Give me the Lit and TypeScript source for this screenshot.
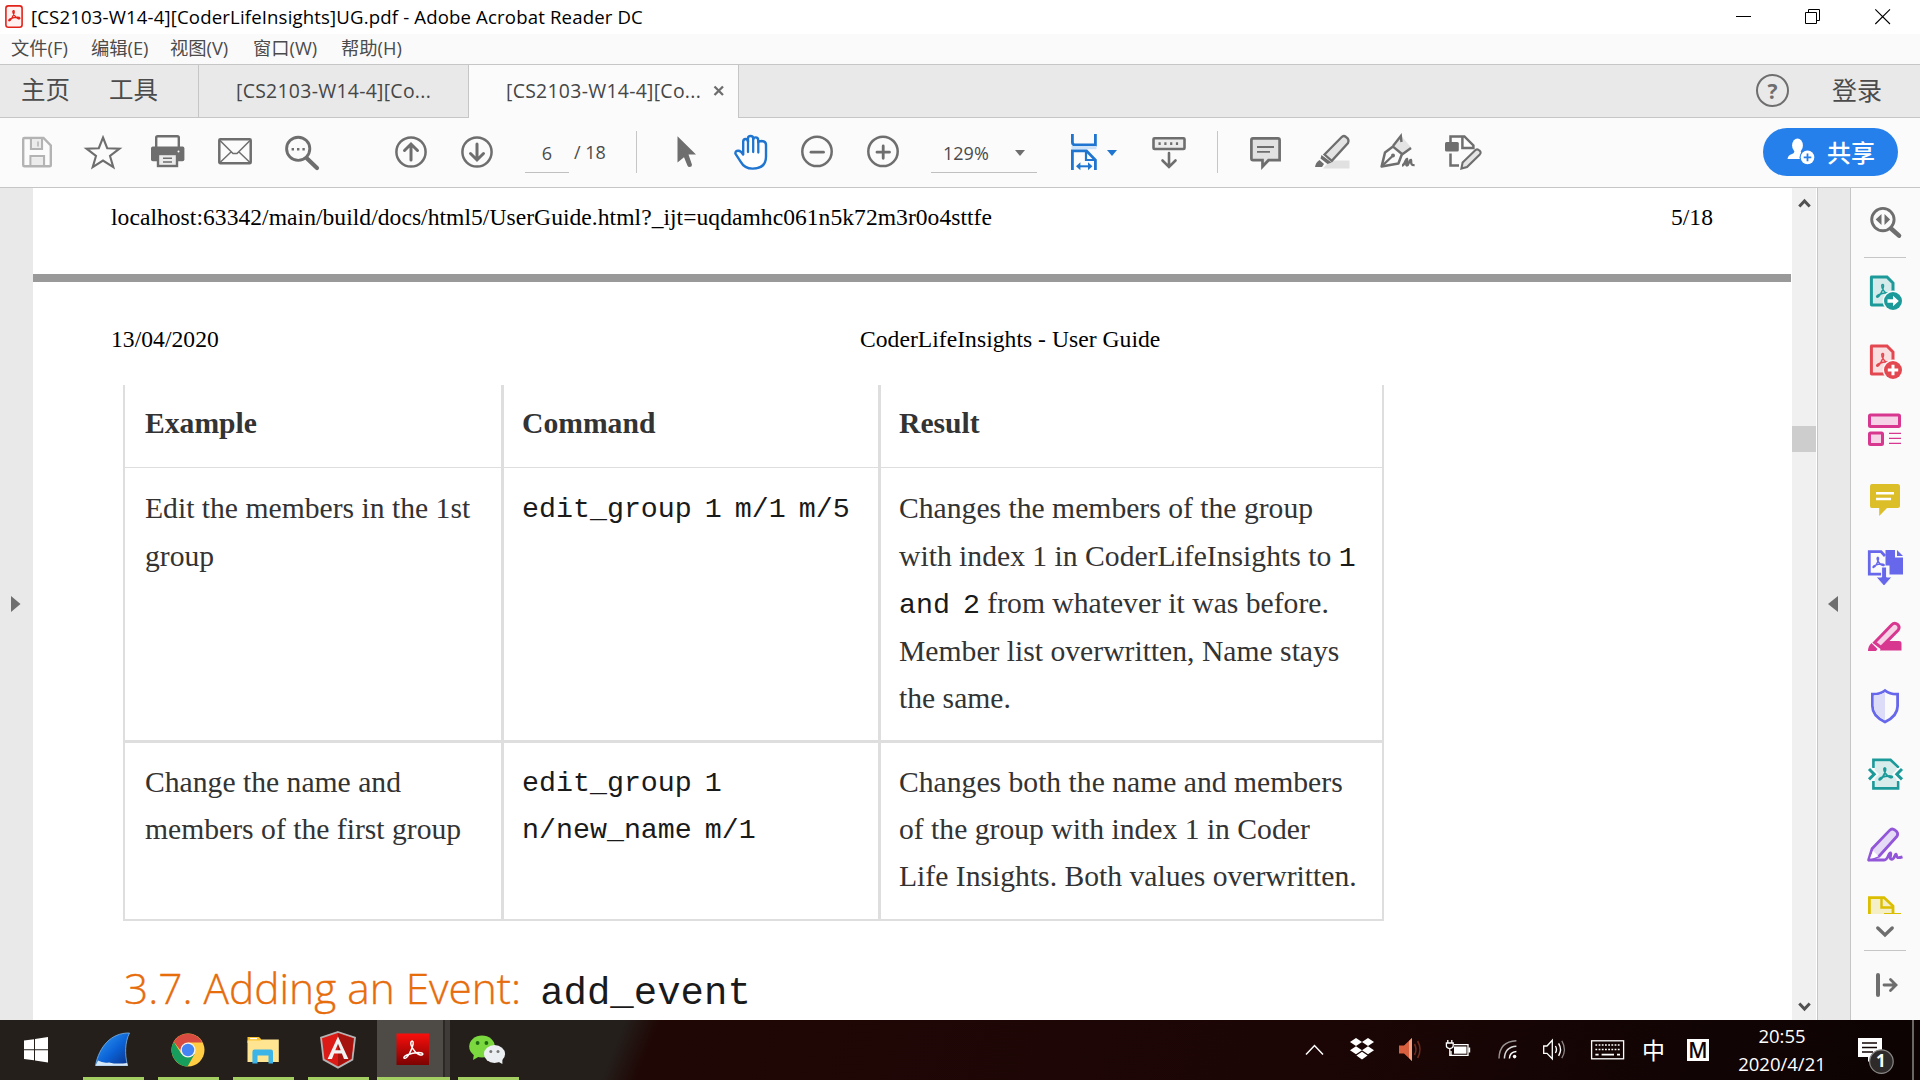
import { LitElement, html, css, svg } from "lit";
import { customElement } from "lit/decorators.js";

const ic = (w: number, h: number, body: unknown) =>
  html`<svg width=${w} height=${h} viewBox="0 0 ${w} ${h}" fill="none">${body}</svg>`;

/* ---------- toolbar icons (36px tall boxes) ---------- */
const G = "#6e6e6e";
const toolIcons = {
  save: ic(32, 36, svg`<path d="M1.2 5.2Q1.2 4 2.4 4H21.5L28.8 11.5V31Q28.8 32.3 27.5 32.3H2.4Q1.2 32.3 1.2 31Z" stroke="#b3b3b3" stroke-width="2.4"/><path d="M9 4.5V15H20V4.5M8.5 32V22H22V32" stroke="#b3b3b3" stroke-width="2.2"/><path d="M10.2 5H19V14H10.2ZM9.8 23.2H21V31H9.8Z" fill="#ebebeb"/><path d="M16 7.5V12.5" stroke="#b3b3b3" stroke-width="1.5"/>`),
  star: ic(38, 36, svg`<path d="M18 3.5L22.2 14.2L34.5 14.6L25 22L28.3 33.2L18 26.6L7.7 33.2L11 22L1.5 14.6L13.8 14.2Z" stroke="${G}" stroke-width="2.1"/>`),
  print: ic(34, 36, svg`<rect x="5.2" y="2.2" width="22.6" height="13" rx="1.5" fill="#fbfbfb" stroke="${G}" stroke-width="2.4"/><rect x="0" y="12.6" width="33.4" height="14.6" rx="1.8" fill="${G}"/><rect x="7" y="20" width="19" height="12" fill="#ebebeb" stroke="${G}" stroke-width="2.4"/><path d="M12 24.2H21M12 28H21" stroke="${G}" stroke-width="1.5"/><circle cx="27.5" cy="17.4" r="1" fill="#fff"/>`),
  mail: ic(36, 36, svg`<rect x="1.3" y="5.2" width="31.4" height="24" rx="1" stroke="${G}" stroke-width="2.5"/><path d="M2 6.5L15 19.5H19L32 6.5M2 28.5L13 18M32 28.5L21 18" stroke="${G}" stroke-width="1.5"/>`),
  find: ic(36, 36, svg`<circle cx="13.2" cy="14.8" r="11.6" stroke="${G}" stroke-width="2.9"/><path d="M21.8 24.2L32 34" stroke="${G}" stroke-width="4.2" stroke-linecap="round"/><path d="M6.6 15.2H9M12 15.2H14.4M17.4 15.2H19.8" stroke="${G}" stroke-width="2.4"/>`),
  up: ic(34, 36, svg`<circle cx="16" cy="18" r="14.6" stroke="${G}" stroke-width="2.5"/><path d="M16 26V10.5M9.5 16.5L16 10L22.5 16.5" stroke="${G}" stroke-width="3" stroke-linecap="round"/>`),
  down: ic(34, 36, svg`<circle cx="16" cy="18" r="14.6" stroke="${G}" stroke-width="2.5"/><path d="M16 10V25.5M9.5 19.5L16 26L22.5 19.5" stroke="${G}" stroke-width="3" stroke-linecap="round"/>`),
  cursor: ic(22, 36, svg`<path d="M0.5 2.2L19 20.6H11.5L15 30.8Q15 33 12.6 33Q11 33 10.4 31.4L7 23.2L0.5 28.6Z" fill="${G}"/>`),
  hand: ic(36, 36, svg`<path d="M9.2 20.5V7.8Q9.2 5 11.6 5Q14 5 14 7.8V4.5Q14 2 16.6 2Q19.2 2 19.2 4.5V5.4Q19.4 3.4 21.6 3.4Q24.2 3.4 24.2 6.4V8.2Q24.8 7 27.6 7Q32.2 7.4 32 11V22.5Q32 34.6 18.6 34.6Q10.5 34.6 6.6 27.6L1.4 19.6Q1.2 16.6 4.4 16.8Q7 17 9.2 20.5Z" fill="#fff" stroke="#1f75cf" stroke-width="2.4" stroke-linejoin="round"/><path d="M14 7V18M19.2 5V18M24.3 7V18.5" stroke="#1f75cf" stroke-width="2.3" stroke-linecap="round"/>`),
  minus: ic(34, 36, svg`<circle cx="16" cy="17.4" r="14.7" stroke="${G}" stroke-width="2.5"/><path d="M10 18.2H22.5" stroke="${G}" stroke-width="2.8" stroke-linecap="round"/>`),
  plus: ic(34, 36, svg`<circle cx="16" cy="17.4" r="14.7" stroke="${G}" stroke-width="2.5"/><path d="M10 18.2H22.5M16.2 12V24.3" stroke="${G}" stroke-width="2.8" stroke-linecap="round"/>`),
  fit: ic(48, 36, svg`<path d="M1.4 0V8.3Q1.4 11 4 11H24.4V0" stroke="#1f75cf" stroke-width="2.8"/><rect x="0.5" y="12" width="25" height="3.2" fill="#cfe3f8"/><path d="M1.4 36V16.8H15.5L24.4 26V36" stroke="#1f75cf" stroke-width="2.8"/><path d="M15 16.8V26H24" stroke="#1f75cf" stroke-width="2.2"/><path d="M7 32.3H19.5" stroke="#1f75cf" stroke-width="2"/><path d="M5 32.3L9.4 28.3V36.3ZM21.4 32.3L17 28.3V36.3Z" fill="#1f75cf"/><path d="M36 16H46L41 22Z" fill="#1f75cf"/>`),
  scroll: ic(36, 36, svg`<rect x="1.5" y="4.2" width="31" height="10.8" rx="1" fill="#ececec" stroke="${G}" stroke-width="2.6"/><path d="M6.5 9.6H8.7M12.3 9.6H14.5M18.1 9.6H20.3M23.9 9.6H26.1" stroke="${G}" stroke-width="2.8"/><path d="M17 19V32M10.5 26.5L17 33L23.5 26.5" stroke="${G}" stroke-width="2.6" stroke-linecap="round"/>`),
  note: ic(34, 36, svg`<path d="M3 4.4H28Q29.6 4.4 29.6 6V26.2H18.5L12.5 32.5V26.2H3Q1.4 26.2 1.4 24.6V6Q1.4 4.4 3 4.4Z" fill="#e1e1e1" stroke="${G}" stroke-width="2.7"/><path d="M7 13H24M7 17.8H20" stroke="${G}" stroke-width="1.8"/>`),
  marker: ic(36, 36, svg`<path d="M15 26.5H34.5V34.6H8Z" fill="#e1e1e1"/><path d="M9.5 20.5L26.5 3.2Q28.6 1 31 3Q34.6 5.4 33 9L16.8 26.8Z" fill="#e4e4e4" stroke="${G}" stroke-width="2.3"/><path d="M6.5 21L16.5 28.5L12.5 30L5.5 24.6Z" fill="${G}"/><path d="M4.5 26L9 30L7 33H0Q0.5 28.5 4.5 26Z" fill="${G}"/>`),
  pen: ic(38, 36, svg`<path d="M20.6 1L31.6 14L24 20.4L14 12Z" fill="#e4e4e4"/><path d="M1.6 32.6L5 18.5L13 12.6L22 20L18.4 29.5Z" stroke="${G}" stroke-width="2.5" stroke-linejoin="round"/><path d="M2 32L12 22.5M13 12L20.8 2L21.5 8M22 20.5L31 14" stroke="${G}" stroke-width="2.4"/><circle cx="13" cy="21.4" r="2" fill="${G}"/><path d="M22 31.5C25 31.5 25.5 24.5 27 24.8C28 25.5 25 31.8 27 31.5C29 31 29 25.5 31 25.8C31.8 26.5 29.5 31.5 34.6 31.2" stroke="${G}" stroke-width="2.3"/>`),
  edit: ic(40, 36, svg`<path d="M5.5 9V2.4H19.4L28.4 11.4V14H17.4V2.8" stroke="${G}" stroke-width="2.5"/><rect x="0" y="8" width="13.8" height="9.6" rx="1.5" fill="${G}"/><path d="M5.5 19.5V31.4H14" stroke="${G}" stroke-width="2.5"/><path d="M16.4 34.6L17.6 28.6L30.5 16Q32.5 14.4 34.5 16.6Q36.6 18.4 34.8 20.4L22 33Z" fill="#e4e4e4" stroke="${G}" stroke-width="2.1"/>`),
};

/* looping three-armed mark used on the document icons */
const trefoil = (x: number, y: number, s: number, c: string, w: number) =>
  svg`<path transform="translate(${x} ${y}) scale(${s})" d="M1 15.4C-0.6 13.8 6 10.6 13.6 10.4C18.4 10.4 18 13.2 15 12.6C10.4 11.5 6.4 4.4 6.8 1.8C7.3 -0.2 9.4 0.1 8.8 3.2C8 7.6 3.6 16.4 1 15.4Z" stroke="${c}" stroke-width="${w / s}"/>`;

/* ---------- right rail icons (36 x 36 boxes) ---------- */
const TEAL = "#1c9a9a", RED = "#e34850", MAG = "#d83790", YEL = "#dcbe29", IND = "#6767ec", PUR = "#9256d9";
const page = (c: string, bg: string) => svg`<path d="M4.6 3H20L26 9V31H4.6Q4.4 31 4.4 30.6V3.4Z" fill="${bg}" stroke="${c}" stroke-width="3"/>${trefoil(9, 10, 0.85, c, 1.5)}`;
const rail = [
  ic(36, 36, svg`<g transform="translate(0 -1)"><path d="M24 24.5L32 31.6" stroke="${G}" stroke-width="4.6" stroke-linecap="round"/><circle cx="15.9" cy="15.6" r="11.2" stroke="${G}" stroke-width="2.9"/><path d="M14.5 10V21L8.7 15.5ZM17.5 10V21L23.1 15.5Z" fill="${G}"/></g>`),
  ic(36, 36, svg`${page(TEAL, "#d5ebeb")}<circle cx="26" cy="27" r="10.4" fill="#fafafa"/><circle cx="26" cy="27" r="9" fill="${TEAL}"/><path d="M20.5 25.2H26V21.8L31.8 27L26 32.2V28.8H20.5Z" fill="#fff"/>`),
  ic(36, 36, svg`${page(RED, "#f9dfe0")}<circle cx="26" cy="27" r="10.4" fill="#fafafa"/><circle cx="26" cy="27" r="9" fill="${RED}"/><path d="M26 21.8V32.2M20.8 27H31.2" stroke="#fff" stroke-width="3"/>`),
  ic(36, 36, svg`<g transform="translate(0 1)"><rect x="2.5" y="2" width="30" height="11.6" rx="1" fill="#f6d3e6" stroke="${MAG}" stroke-width="3"/><rect x="2.5" y="20" width="13" height="11.6" rx="1" fill="#f6d3e6" stroke="${MAG}" stroke-width="3"/><path d="M22 20.4H34M22 25.4H34M22 30.4H34" stroke="${MAG}" stroke-width="1.4"/></g>`),
  ic(36, 36, svg`<g transform="translate(0 1)"><path d="M4.5 2H30.5Q33 2 33 4.5V23.5Q33 26 30.5 26H20L12.2 34V26H4.5Q3 26 3 23.5V4.5Q3 2 4.5 2Z" fill="${YEL}"/><path d="M9 11.2H27M9 17H24" stroke="#fff" stroke-width="2.4"/></g>`),
  ic(36, 36, svg`<path d="M14 24.2H2.3V1.6H14L18 6" stroke="${IND}" stroke-width="2.8"/><path d="M18.5 0H28V7.5H36V24.5H22.5V15.5H18.5Z" fill="${IND}"/><path d="M30 0L36 6H30Z" fill="${IND}"/>${trefoil(5.5, 7, 0.68, IND, 1.5)}<path d="M14.6 17H19.6V27H25L17 36L9 27H14.6Z" fill="${IND}" stroke="#fafafa" stroke-width="1"/>`),
  ic(36, 36, svg`<path d="M17 22H32Q34.5 22 34.5 24V31.5H13Z" fill="${MAG}"/><path d="M7.6 23.5L24.5 6Q27.5 2.8 30.5 5.4Q33.4 8 31 11.4L14 28.4Z" fill="#f6d3e6" stroke="${MAG}" stroke-width="3"/><path d="M4.5 24L10.5 30L9 32H1Q1 27 4.5 24Z" fill="${MAG}"/>`),
  ic(36, 36, svg`<path d="M18 2.5Q23 6.5 30.6 6.2V18Q30.6 28 18 34Q5.4 28 5.4 18V6.2Q13 6.5 18 2.5Z" stroke="${IND}" stroke-width="2.8"/><path d="M18 4.5Q13 7.6 6.8 7.6V18Q7 26.8 18 32.3Z" fill="#dcdcf9"/>`),
  ic(36, 36, svg`<path d="M6.5 11V3H23.5L31 10V11M31 24V31.4H6.5V24" fill="none" stroke="${TEAL}" stroke-width="2.8"/><path d="M7.8 4.4H23L29.6 10.6V30H7.8Z" fill="#d9ecec"/><path d="M1.5 12L7 17.2L1.5 22.4M35.5 12L30 17.2L35.5 22.4" stroke="#fafafa" stroke-width="7"/><path d="M2 12L7.2 17.2L2 22.4M35 12L29.8 17.2L35 22.4" stroke="${TEAL}" stroke-width="3"/>${trefoil(11.5, 10.5, 0.8, TEAL, 1.8)}`),
  ic(36, 36, svg`<g transform="translate(0 .8)"><path d="M1.6 33.2L5 22L22.6 3.6Q25 1 28 3.4Q32 6 30 9.5L12 29.5Z" fill="#e6dbf6" stroke="${PUR}" stroke-width="2.8" stroke-linejoin="round"/><path d="M2.5 33L6 24L11.5 29.5Z" fill="#fff"/><path d="M1.6 33.2H17C22 33 21 25.5 23.6 26C25 27 21.5 32.6 24.5 32.6C28 32.5 27.5 27 29 27.4C30.5 28.5 27.5 32.5 35.5 30" stroke="${PUR}" stroke-width="2.8"/></g>`),
];
const moreDoc = ic(36, 20, svg`<path d="M2.4 24V2.6H17L26 11V24Z" fill="#f5efc8" stroke="#dcbe00" stroke-width="2.8"/><path d="M14.5 3V12.5H25" stroke="#dcbe00" stroke-width="2.4"/><path d="M17 18H34V22H17Z" fill="#dcbe00"/>`);

/* ---------- taskbar icons ---------- */
const apps = {
  win: ic(24, 26, svg`<path d="M0 3.6L10 2.2V12.2H0ZM11 2L24 0V12.2H11ZM0 13.2H10V23.3L0 22ZM11 13.2H24V25.4L11 23.5Z" fill="#fff"/>`),
  shark: ic(36, 36, svg`<defs><linearGradient id="sh" x1="0" y1="0" x2="1" y2="1"><stop offset="0" stop-color="#35a0f5"/><stop offset=".55" stop-color="#0b62d6"/><stop offset="1" stop-color="#0a2f86"/></linearGradient></defs><path d="M0.5 33.5C4 15 16 0.5 34.5 1C30 10 29.5 22 32.5 33.5Z" fill="url(#sh)" stroke="#7fb6ea" stroke-width=".8"/><path d="M0.5 33.8L3 28.6Q8 31.5 14 30.4Q22 32.4 32 31L33 33.8Z" fill="#d6e8f8"/>`),
  chrome: ic(34, 34, svg`<circle cx="17" cy="17" r="16.5" fill="#fc4"/><path d="M17 9.4H31.3A16.5 16.5 0 0 0 2.7 8.8L10 18Z" fill="#d94b40"/><path d="M2.7 8.8A16.5 16.5 0 0 0 16.6 33.5L23.6 21L10.4 21Z" fill="#189e5c"/><circle cx="17" cy="17" r="7.6" fill="#f4f4f4"/><circle cx="17" cy="17" r="6.2" fill="#4484f3"/>`),
  folder: ic(32, 28, svg`<path d="M0.5 1H12L14.5 3.5V7H0.5Z" fill="#f7c331"/><path d="M0.5 4.5H13.5L15 3.4H31.8V26H0.5Z" fill="#ffe592"/><path d="M3 2.6H10" stroke="#fff" stroke-width="1.2"/><path d="M5.4 27.5V16Q5.4 13.6 7.5 13.6H24Q26 13.6 26 16V27.5H21.5V19.5H10.5V27.5Z" fill="#3cb4e7"/>`),
  angular: ic(36, 38, svg`<path d="M18 1L35 6.6L32.4 28.6L18 36.6L3.6 28.6L1 6.6Z" fill="#dd1b16" stroke="#b3b3b3" stroke-width="1.8"/><path d="M18 2.2V35.2L31.4 27.8L33.6 7.5Z" fill="#a6120d"/><path d="M18 5.5L28.4 28H24L21.9 22.6H14.1L12 28H7.6ZM18 12.8L15.3 19.2H20.7Z" fill="#f2f2f2" fill-rule="evenodd"/>`),
  acrobat: ic(34, 34, svg`<defs><linearGradient id="ac" x1="0" y1="0" x2="0" y2="1"><stop offset="0" stop-color="#fa0f0c"/><stop offset="1" stop-color="#7c0202"/></linearGradient></defs><rect x="0.5" y="0.5" width="32.5" height="31.5" fill="url(#ac)"/>${trefoil(7, 7.5, 1.15, "#fff", 1.5)}`),
  wechat: ic(38, 30, svg`<ellipse cx="13" cy="11.5" rx="12.8" ry="11" fill="#7bd83f"/><path d="M5 19L4 25L11 21Z" fill="#7bd83f"/><circle cx="8.6" cy="8" r="1.9" fill="#1f6b12"/><circle cx="17.4" cy="8" r="1.9" fill="#1f6b12"/><ellipse cx="25.5" cy="19" rx="10.6" ry="9" fill="#eceff1"/><path d="M28 26L33.4 29V24Z" fill="#eceff1"/><circle cx="21.8" cy="16.4" r="1.5" fill="#777"/><circle cx="29" cy="16.4" r="1.5" fill="#777"/>`),
};
const tray = {
  caret: ic(20, 12, svg`<path d="M1 10.5L9.5 1.5L18 10.5" stroke="#fff" stroke-width="1.5"/>`),
  dropbox: ic(26, 24, svg`<path d="M6 0L12 4L6 8L0 4ZM18 0L24 4L18 8L12 4ZM6 8.2L12 12.2L6 16.2L0 12.2ZM18 8.2L24 12.2L18 16.2L12 12.2ZM12 13.8L17.6 17.6L12 21.6L6.4 17.6Z" fill="#fff"/>`),
  red: ic(24, 24, svg`<path d="M0 7.5H5L13 0V23L5 15.5H0Z" fill="#d9603f"/><path d="M10 3V20L13 23V0Z" fill="#f3a083"/><path d="M15.5 6Q18.5 11.5 15.5 17M18.6 3Q23.4 11.5 18.6 20" stroke="#6e2a1a" stroke-width="1.6"/>`),
  battery: ic(26, 20, svg`<path d="M8 4.6H22V15.4H5V11" stroke="#fff" stroke-width="1.3"/><rect x="8" y="6.5" width="12.5" height="7.2" fill="#fff"/><rect x="22.4" y="7.5" width="1.8" height="5" fill="#fff"/><path d="M1.8 0V3M5.8 0V3M0.4 3H7.2V6Q7.2 8 3.8 8.6Q0.4 8 0.4 6ZM3.8 8.5V15.4H6" stroke="#fff" stroke-width="1.3"/>`),
  wifi: ic(22, 22, svg`<circle cx="16.6" cy="17.6" r="1.8" fill="#fff"/><path d="M11.4 19.5Q11.6 12.9 18.4 12.5" stroke="#fff" stroke-width="1.5"/><path d="M6.4 19.5Q6.8 7.8 18.4 7.2" stroke="#d8d8d8" stroke-width="1.5"/><path d="M1 19.5Q1.4 2.4 18.4 1.8" stroke="#9b9494" stroke-width="1.4"/>`),
  sound: ic(24, 22, svg`<path d="M0.7 7H4L9.3 1.2V19.8L4 14.4H0.7Z" stroke="#fff" stroke-width="1.3"/><path d="M12.4 7Q14.6 10.5 12.4 14M15.6 4.4Q19.4 10.5 15.6 16.8" stroke="#fff" stroke-width="1.4"/><path d="M18.8 1.8Q24 10.5 18.8 19.2" stroke="#8d8585" stroke-width="1.3"/>`),
  keyboard: ic(34, 20, svg`<rect x="0.6" y="0.8" width="32" height="18" stroke="#fff" stroke-width="1.3"/><path d="M4.4 5H29M4.4 9.6H29" stroke="#fff" stroke-width="1.5" stroke-dasharray="1.8 1.4"/><path d="M4.4 14.6H7.6M10.6 14.6H23M26 14.6H29" stroke="#fff" stroke-width="1.6"/>`),
  notice: ic(38, 38, svg`<path d="M0 0H24V19H15.4L10 24V19H0Z" fill="#fff"/><path d="M4 5H19M4 9.5H19M4 14H15" stroke="#120405" stroke-width="1.4"/><circle cx="23.4" cy="23.6" r="11.8" fill="#2e2a2a" stroke="#8b8888" stroke-width="1.2"/>`),
};

@customElement("app-root")
export class AppRoot extends LitElement {
  static styles = css`
    :host { display: flex; flex-direction: column; width: 1920px; height: 1080px; overflow: hidden; background: #fff;
      font-family: "Open Sans", "Noto Sans CJK SC", sans-serif; color: #4b4b4b; }
    * { box-sizing: border-box; }
    svg { display: block; flex: none; overflow: visible; }
    span { white-space: nowrap; }

    .title { display: flex; height: 34px; flex: none; background: #fff; color: #000; padding: 5px 29px 0 5px; }
    .title .name { font-size: 18.6px; letter-spacing: 0.15px; line-height: 24px; margin-left: 8px; flex: 1; }
    .wins { display: flex; gap: 54px; padding-top: 4px; }
    .menu { display: grid; grid-template-columns: 80px 79px 83px 88px 100px; height: 30px; flex: none; padding-left: 11px; background: #fafafa; font-size: 18.3px; line-height: 28px; }

    .tabs { display: flex; height: 54px; flex: none; background: #e9e9e9; border-top: 1px solid #c6c6c6; border-bottom: 1px solid #c6c6c6; }
    .nav { display: flex; width: 199px; padding-left: 21px; gap: 39px; font-size: 24.5px; line-height: 50px; border-right: 1px solid #c6c6c6; }
    .tab { display: flex; width: 269px; padding-left: 37px; font-size: 19.4px; letter-spacing: 0.3px; line-height: 52px; color: #464646; }
    .tab.on { width: 271px; background: #fbfbfb; border: solid #c6c6c6; border-width: 0 1px; height: 53px; }
    .tab svg { margin: 20px 0 0 12px; }
    .account { display: flex; margin-left: auto; padding-right: 38px; gap: 43px; font-size: 25px; line-height: 51px; }
    .help { display: grid; place-items: center; width: 33px; height: 33px; margin-top: 9px; border: 2.5px solid #6e6e6e; border-radius: 50%; font-size: 21px; font-weight: 700; line-height: 20px; color: #6e6e6e; }

    .tools { display: grid; grid-template-columns: 63px 66px 67px 67px 110px 66px 64px 49px 62px 41px 57px 67px 66px 64px 140px 81px 65px 33px 65px 65px 65px 318px 135px; height: 70px; flex: none; padding: 16px 0 0 22px; background: #fbfbfb; border-bottom: 1px solid #c6c6c6; align-items: start; }
    .field { display: flex; align-items: center; height: 39px; border-bottom: 1px solid #c0c0c0; font-size: 18px; }
    .pg { width: 44px; justify-content: center; }
    .of { font-size: 18px; line-height: 37px; }
    .zoom { width: 106px; padding: 0 0 1px 12px; gap: 26px; }
    .sep { width: 1px; height: 42px; margin-top: -3px; background: #c6c6c6; }
    .share { display: flex; align-items: center; width: 135px; height: 48px; margin-top: -6px; border-radius: 24px; background: #2680eb; color: #fff; padding-left: 24px; gap: 11px; font-size: 24px; font-weight: 500; }
    .share span { padding-bottom: 2px; }

    .body { display: flex; height: 832px; flex: none; }
    .left { width: 33px; background: #e9e9e9; display: flex; align-items: center; padding-left: 11px; }
    .doc { width: 1759px; height: 832px; overflow: hidden; background: #fff; font-family: "Liberation Serif", serif; color: #000; }
    .foot { display: flex; justify-content: space-between; height: 86px; padding: 16px 79px 0 78px; font-size: 23.55px; letter-spacing: 0.045px; line-height: 27px; }
    .gap { height: 8px; background: #999; margin-right: 1px; }
    .head { display: grid; grid-template-columns: 749px 1fr; height: 103px; padding: 44px 0 0 78px; font-size: 23.6px; letter-spacing: 0.03px; line-height: 27px; }
    .table { display: grid; grid-template-columns: 379px 377px 503px; width: 1261px; margin-left: 90px; border-left: 2px solid #dedede; color: #333; font-size: 29.65px; line-height: 47.5px; }
    .cell { padding-left: 18px; border-right: 3px solid #dedede; }
    .cell.first { padding-left: 20px; }
    .cell.end { border-right-width: 2px; }
    .cell span { display: block; }
    .h { height: 83px; font-weight: 700; border-bottom: 1px solid #dedede; padding-top: 15px; }
    .r1 { height: 275px; border-bottom: 3px solid #dedede; padding-top: 17px; }
    .r2 { height: 178px; border-bottom: 2px solid #dedede; padding-top: 16px; line-height: 47.2px; }
    .cell .mono, .cell code, .section code { font-family: "Courier 10 Pitch", "Liberation Mono", monospace; color: #1a1a1a; }
    .cell .mono, .cell code { font-size: 28.3px; word-spacing: -4px; }
    .cell code { line-height: 0; }
    .cell.cmd { padding-top: 18px; }
    .cell.cmd.r2 { padding-top: 17px; }
    .section { display: flex; align-items: baseline; gap: 19px; margin: 29px 0 0 91px; font: 300 42.4px/76px "Open Sans", sans-serif; color: #e66c0c; -webkit-text-stroke: 0.35px #e66c0c; }
    .section code { font-size: 39px; line-height: 60px; -webkit-text-stroke: 0; }

    .bar { display: flex; flex-direction: column; width: 24px; background: #f0f0f0; padding: 10px 0 8px; align-items: center; }
    .thumb { width: 24px; height: 26px; margin: 218px 0 auto; background: #cdcdcd; }
    .side { display: flex; align-items: center; width: 34px; margin-left: 1px; border: solid #c6c6c6; border-width: 0 1px; background: #e9e9e9; padding-left: 10px; }
    .rail { display: flex; flex-direction: column; align-items: center; width: 69px; background: #fafafa; padding: 17px 1px 0 0; }
    .rail .i { height: 69px; flex: none; }
    .hr { width: 42px; height: 1px; background: #c6c6c6; flex: none; }
    .hr.top { margin: -1px 0 0; }
    .rail .i.a { height: 53px; }
    .rail .i.b { height: 69px; margin-top: 16px; }
    .chev { margin: 12px 0; }
    .cut { height: 19px; overflow: hidden; flex: none; }
    .out { margin-top: 22px; padding-left: 3px; }

    .task { display: flex; height: 60px; flex: none; background: linear-gradient(112deg, #241f1b 0, #241f1b 580px, #1f0705 612px, #1c0605 1200px, #110404 1600px, #0d0303 100%); color: #fff; }
    .app { display: flex; flex-direction: column; align-items: center; justify-content: center; width: 61px; margin-right: 14px; border-bottom: 3px solid #a3cf62; padding: 3px 2px 0 0; }
    .start { width: 71px; padding-right: 0; margin-right: 12px; border-color: transparent; }
    .hot { width: 73px; margin: 0 8px 0 -6px; background: linear-gradient(90deg, #4e4a46 66px, #2c2825 66px, #2c2825 68px, #3f3b38 68px); padding-right: 1px; }
    .tray { display: grid; align-items: center; margin-left: auto; grid-template-columns: 45px 49px 47px 52px 45px 48px 53px 43px 50px 90px 31px 54px 8px; }
    .zh { font-size: 23px; line-height: 56px; margin-left: -2px; }
    .ime { display: grid; place-items: center; width: 22px; height: 22px; background: #fff; color: #120405; font-size: 21px; font-weight: 600; line-height: 22px; }
    .clock { text-align: center; font-size: 18.5px; line-height: 28px; }
    .clock span { display: block; }
    .bell { position: relative; margin-top: 14px; }
    .bell b { position: absolute; left: 18px; top: 11px; font-size: 17px; line-height: 24px; }
    .edge { width: 2px; height: 60px; background: #6b6666; }
  `;

  render() {
    return html`
      <div class="title">
        ${ic(18, 24, svg`<rect x="0.9" y="0.9" width="16.2" height="21.4" rx="2.5" fill="#fff2f1" stroke="#e2231a" stroke-width="1.6"/>${trefoil(3.2, 5.2, 0.68, "#e2231a", 1.3)}`)}
        <span class="name">[CS2103-W14-4][CoderLifeInsights]UG.pdf - Adobe Acrobat Reader DC</span>
        <div class="wins">
          ${ic(15, 16, svg`<path d="M0 7.5H15" stroke="#000"/>`)}
          ${ic(16, 16, svg`<path d="M0.5 3.5H11.5V14.5H0.5ZM3.5 3.5V0.5H14.5V11.5H11.5" stroke="#000"/>`)}
          ${ic(16, 16, svg`<path d="M0.3 0.3L15 15M15 0.3L0.3 15" stroke="#000" stroke-width="1.1"/>`)}
        </div>
      </div>
      <div class="menu"><span>文件(F)</span><span>编辑(E)</span><span>视图(V)</span><span>窗口(W)</span><span>帮助(H)</span></div>
      <div class="tabs">
        <div class="nav"><span>主页</span><span>工具</span></div>
        <div class="tab"><span>[CS2103-W14-4][Co...</span></div>
        <div class="tab on"><span>[CS2103-W14-4][Co...</span>${ic(12, 12, svg`<path d="M1.5 1.5L10 10M10 1.5L1.5 10" stroke="#6e6e6e" stroke-width="2.3"/>`)}</div>
        <div class="account"><div class="help">?</div><span>登录</span></div>
      </div>
      <div class="tools">
        ${toolIcons.save}${toolIcons.star}${toolIcons.print}${toolIcons.mail}${toolIcons.find}${toolIcons.up}${toolIcons.down}
        <div class="field pg"><span>6</span></div><span class="of">/ 18</span><div class="sep"></div>
        ${toolIcons.cursor}${toolIcons.hand}${toolIcons.minus}${toolIcons.plus}
        <div class="field zoom"><span>129%</span>${ic(10, 6, svg`<path d="M0 0H10L5 6Z" fill="#6e6e6e"/>`)}</div>
        ${toolIcons.fit}${toolIcons.scroll}<div class="sep"></div>
        ${toolIcons.note}${toolIcons.marker}${toolIcons.pen}${toolIcons.edit}
        <div class="share">${ic(29, 28, svg`<ellipse cx="10.5" cy="7.4" rx="5.4" ry="7" fill="#fff"/><path d="M0.5 21Q1 17 5 16Q7.5 15.4 7.5 12H13.5Q13.5 15 15.5 16V21Z" fill="#fff"/><circle cx="20.5" cy="19.4" r="8" fill="#2680eb"/><circle cx="20.5" cy="19.4" r="6.8" fill="#fff"/><path d="M20.5 15.6V23.2M16.7 19.4H24.3" stroke="#2680eb" stroke-width="1.8"/>`)}<span>共享</span></div>
      </div>
      <div class="body">
        <div class="left">${ic(10, 16, svg`<path d="M0 0L9.5 8L0 16Z" fill="#6e6e6e"/>`)}</div>
        <div class="doc">
          <div class="foot"><span>localhost:63342/main/build/docs/html5/UserGuide.html?_ijt=uqdamhc061n5k72m3r0o4sttfe</span><span>5/18</span></div>
          <div class="gap"></div>
          <div class="head"><span>13/04/2020</span><span>CoderLifeInsights - User Guide</span></div>
          <div class="table">
            <div class="cell first h"><span>Example</span></div><div class="cell h"><span>Command</span></div><div class="cell h end"><span>Result</span></div>
            <div class="cell first r1"><span>Edit the members in the 1st</span><span>group</span></div>
            <div class="cell cmd r1"><span class="mono">edit_group 1 m/1 m/5</span></div>
            <div class="cell r1 end"><span>Changes the members of the group</span><span>with index 1 in CoderLifeInsights to <code>1</code></span><span><code>and 2</code> from whatever it was before.</span><span>Member list overwritten, Name stays</span><span>the same.</span></div>
            <div class="cell first r2"><span>Change the name and</span><span>members of the first group</span></div>
            <div class="cell cmd r2"><span class="mono">edit_group 1</span><span class="mono">n/new_name m/1</span></div>
            <div class="cell r2 end"><span>Changes both the name and members</span><span>of the group with index 1 in Coder</span><span>Life Insights. Both values overwritten.</span></div>
          </div>
          <div class="section"><span>3.7. Adding an Event:</span><code>add_event</code></div>
        </div>
        <div class="bar">
          ${ic(13, 10, svg`<path d="M1.3 8.5L6.5 3L11.7 8.5" stroke="#505050" stroke-width="3"/>`)}
          <div class="thumb"></div>
          ${ic(13, 10, svg`<path d="M1.3 1.5L6.5 7L11.7 1.5" stroke="#505050" stroke-width="3"/>`)}
        </div>
        <div class="side">${ic(10, 16, svg`<path d="M10 0L0 8L10 16Z" fill="#6e6e6e"/>`)}</div>
        <div class="rail">
          <div class="i a">${rail[0]}</div>
          <div class="hr top"></div>
          <div class="i b">${rail[1]}</div>
          ${rail.slice(2).map((r) => html`<div class="i">${r}</div>`)}
          <div class="cut">${moreDoc}</div>
          <div class="chev">${ic(18, 12, svg`<path d="M1.8 2L9 9L16.2 2" stroke="#6e6e6e" stroke-width="3.4" stroke-linecap="round"/>`)}</div>
          <div class="hr"></div>
          <div class="out">${ic(22, 24, svg`<path d="M2 2V22" stroke="#6e6e6e" stroke-width="4" stroke-linecap="round"/><path d="M8 12H19M14.5 6.6L20 12L14.5 17.4" stroke="#6e6e6e" stroke-width="2.8" stroke-linecap="round"/>`)}</div>
        </div>
      </div>
      <div class="task">
        <div class="app start">${apps.win}</div>
        <div class="app">${apps.shark}</div><div class="app">${apps.chrome}</div><div class="app">${apps.folder}</div><div class="app">${apps.angular}</div>
        <div class="app hot">${apps.acrobat}</div><div class="app">${apps.wechat}</div>
        <div class="tray">
          ${tray.caret}${tray.dropbox}${tray.red}${tray.battery}${tray.wifi}${tray.sound}${tray.keyboard}
          <span class="zh">中</span><span class="ime">M</span>
          <div class="clock"><span>20:55</span><span>2020/4/21</span></div><i></i>
          <div class="bell">${tray.notice}<b>1</b></div><div class="edge"></div>
        </div>
      </div>`;
  }
}
